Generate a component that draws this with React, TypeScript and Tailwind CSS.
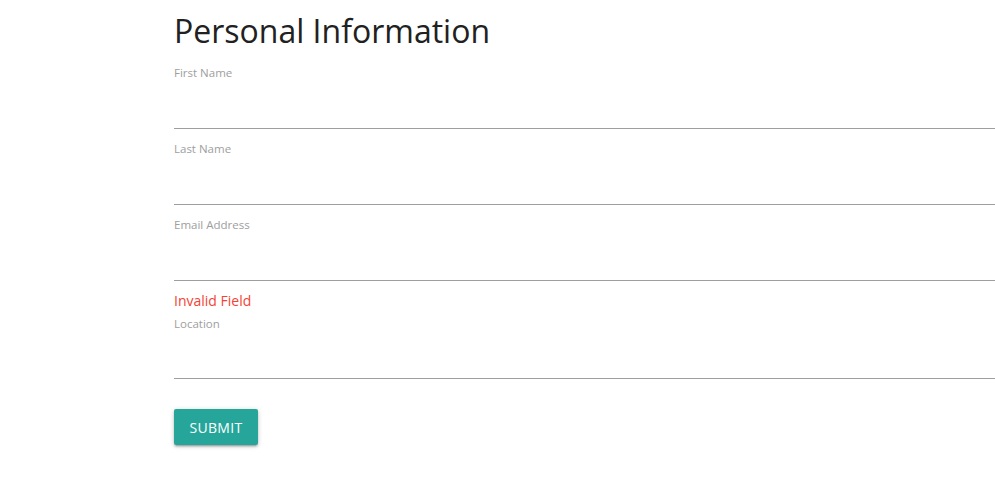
export default function App() {
  const fields = ["First Name", "Last Name", "Email Address"];
  return (
    <div className="w-[995px] h-[500px] bg-white pl-[174px] pt-[9px]" style={{ fontFamily: '"Segoe UI", "Open Sans", sans-serif' }}>
      <h1 className="text-[32px] leading-[44px] text-[#212121] font-normal">Personal Information</h1>
      <div className="mt-[12px] flex flex-col">
        {fields.map((f) => (
          <div key={f} className="mb-[12px]">
            <div className="text-[11.5px] leading-[16px] text-[#9e9e9e]">{f}</div>
            <div className="h-[48px] border-b border-[#9e9e9e]" />
          </div>
        ))}
        <div className="mt-[-2px] text-[14px] leading-[20px] text-[#f44336]">Invalid Field</div>
        <div className="mt-[5px] text-[11.5px] leading-[16px] text-[#9e9e9e]">Location</div>
        <div className="h-[47px] border-b border-[#9e9e9e]" />
        <button className="mt-[30px] w-[84px] h-[36px] bg-[#26a69a] text-white text-[14px] rounded-[2px] shadow-[0_2px_2px_0_rgba(0,0,0,0.14),0_3px_1px_-2px_rgba(0,0,0,0.12),0_1px_5px_0_rgba(0,0,0,0.2)] tracking-[0.3px]">SUBMIT</button>
      </div>
    </div>
  );
}
